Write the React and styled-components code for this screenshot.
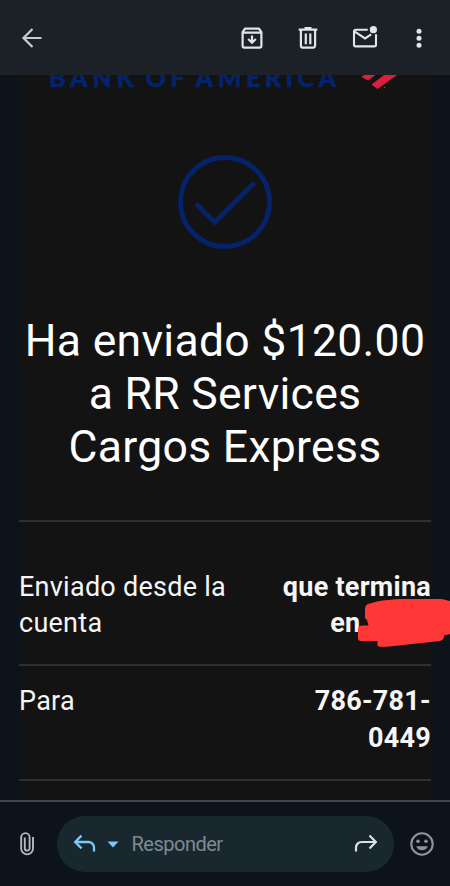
import React from 'react';
import styled, { createGlobalStyle } from 'styled-components';

const GlobalStyle = createGlobalStyle`
    body {
        margin: 0;
        background: #0c131a;
        font-family: Roboto, 'Liberation Sans', sans-serif;
    }
    svg {
        display: block;
        flex: none;
    }
`;

const Screen = styled.div`
    display: flex;
    flex-direction: column;
    width: 450px;
    height: 886px;
    overflow: hidden;
    background: #0c131a;
`;

const TopBar = styled.header`
    display: flex;
    align-items: center;
    justify-content: space-between;
    flex: none;
    box-sizing: border-box;
    height: 75px;
    padding: 0 17px 0 18px;
    background: #1c2128;
`;

const Actions = styled.div`
    display: flex;
    align-items: center;
    gap: 28.5px;
`;

const IconButton = styled.button`
    display: flex;
    padding: 0;
    border: none;
    background: transparent;
    cursor: pointer;
    color: ${(props) => props.$color || '#e1e4ea'};
`;

const MoreButton = styled(IconButton)`
    margin-left: -2px;
`;

const MailBody = styled.main`
    flex: none;
    height: 725px;
    padding: 0 19px;
    overflow: hidden;
    background: #0c131a;
`;

const Letter = styled.article`
    display: flex;
    flex-direction: column;
    height: 725px;
    background: #131313;
`;

const Brand = styled.div`
    display: flex;
    align-items: flex-end;
    flex: none;
    height: 18px;
    padding-left: 30px;
    overflow: hidden;
`;

const BrandName = styled.div`
    display: flex;
    gap: 7px;
    width: 312px;
    margin-bottom: 1px;
    font-family: Lato, 'Liberation Sans', sans-serif;
    font-size: 25px;
    font-weight: 900;
    line-height: 30px;
    color: #05236a;
    -webkit-text-stroke: 0.6px #05236a;
`;

const BrandWord = styled.span`
    letter-spacing: ${(props) => props.$spacing};
`;

const CheckMark = styled.div`
    display: flex;
    justify-content: center;
    margin-top: 61px;
`;

const Title = styled.h1`
    margin: 65px 0 0;
    font-size: 44.5px;
    font-weight: 400;
    line-height: 53px;
    text-align: center;
    letter-spacing: 0.3px;
    white-space: nowrap;
    color: #fff;
`;

const Details = styled.dl`
    margin: 46px 0 0;
    border-top: 2px solid #303030;
`;

const Row = styled.div`
    display: flex;
    justify-content: space-between;
    box-sizing: border-box;
    height: ${(props) => props.$height};
    padding-top: ${(props) => props.$top};
    border-bottom: 2px solid #303030;
    font-size: 27px;
    line-height: 36.5px;
    letter-spacing: 0.26px;
    color: #f6f6f6;
`;

const Label = styled.dt`
    white-space: nowrap;
`;

const Value = styled.dd`
    margin: 0;
    font-weight: 700;
    text-align: right;
    white-space: nowrap;
`;

const Hidden = styled.span`
    position: relative;
    display: inline-block;
    width: 70.5px;
`;

const Scribble = styled.svg`
    position: absolute;
    left: -3.5px;
    top: -34px;
`;

const ReplyBar = styled.footer`
    display: flex;
    align-items: center;
    flex: none;
    box-sizing: border-box;
    height: 86px;
    padding: 0 15px 0 19px;
    border-top: 2px solid #41464c;
    background: #0c131a;
`;

const ReplyField = styled.div`
    display: flex;
    align-items: center;
    box-sizing: border-box;
    width: 337px;
    height: 56px;
    margin: 0 15.5px 0 20.5px;
    padding: 0 16px 0 16.5px;
    border-radius: 28px;
    background: #19282f;
`;

const CaretWrap = styled.span`
    margin-left: 9.5px;
`;

const Placeholder = styled.span`
    flex: 1;
    margin-left: 13px;
    font-size: 20px;
    line-height: 24px;
    letter-spacing: -0.5px;
    color: #7f8a92;
`;

const BackIcon = () => (
    <svg width="28" height="28" fill="none" stroke="currentColor" strokeWidth="2.2">
        <path d="M23.5 14H6M14.5 5L5.5 14l9 9" />
    </svg>
);

const ArchiveIcon = () => (
    <svg width="28" height="28" fill="none" stroke="currentColor" strokeWidth="2.2">
        <path d="M4.6 8.2L7 4.6h14l2.4 3.6v13.6a1.8 1.8 0 0 1-1.8 1.8H6.4a1.8 1.8 0 0 1-1.8-1.8zM4.6 8.6h18.8" strokeLinejoin="round" />
        <path d="M14 11.5v7M10.2 15l3.8 3.8 3.8-3.8" />
    </svg>
);

const TrashIcon = () => (
    <svg width="28" height="28" fill="none" stroke="currentColor" strokeWidth="2.2">
        <path d="M4.7 5.7h18.6M10.5 4.2h7M6.9 6v15.8a1.8 1.8 0 0 0 1.8 1.8h10.6a1.8 1.8 0 0 0 1.8-1.8V6M11.8 9.5v10.7M16.3 9.5v10.7" />
    </svg>
);

const UnreadIcon = () => (
    <svg width="28" height="28" fill="none" stroke="currentColor" strokeWidth="2.1">
        <path d="M16.7 5.8H4.6a1.6 1.6 0 0 0-1.6 1.6v13.4a1.6 1.6 0 0 0 1.6 1.6h18.8a1.6 1.6 0 0 0 1.6-1.6v-10.6M3.4 7.4l10.6 7 6.2-4.1" />
        <circle cx="22.4" cy="5.7" r="3.6" fill="currentColor" stroke="none" />
    </svg>
);

const MoreIcon = () => (
    <svg width="28" height="28" fill="currentColor">
        <circle cx="14" cy="7.2" r="2.5" />
        <circle cx="14" cy="14.2" r="2.5" />
        <circle cx="14" cy="21.2" r="2.5" />
    </svg>
);

const FlagIcon = () => (
    <svg width="38" height="18" fill="#dc1f3e">
        <path d="M0.5 2L3 0H14.5L7 5.5z" />
        <path d="M10.5 9.5L23 0h13L16.5 14z" />
        <circle cx="23.5" cy="12.5" r="0.8" />
    </svg>
);

const ClipIcon = () => (
    <svg width="17" height="28" fill="none" stroke="currentColor" strokeWidth="1.9">
        <path d="M14 7v11.5a5.9 5.9 0 0 1-11.8 0V7.3a4.2 4.2 0 0 1 8.4 0v10.9a2.4 2.4 0 0 1-4.8 0V7.5" />
    </svg>
);

const ReplyIcon = () => (
    <svg width="24" height="20" fill="none" stroke="#7cc8f4" strokeWidth="2.3">
        <path d="M8.5 1.6L2.2 8l6.3 6.4M2.8 8H15.5a5.5 5.5 0 0 1 5.5 5.5V17.5" />
    </svg>
);

const CaretIcon = () => (
    <svg width="12" height="7" fill="#7cc8f4">
        <path d="M0.5 0.5h11L6 6.5z" />
    </svg>
);

const ForwardIcon = () => (
    <svg width="24" height="20" fill="none" stroke="#dbe1e5" strokeWidth="2.2">
        <path d="M15.5 1.6L21.8 8l-6.3 6.4M21.2 8H7.5A5.5 5.5 0 0 0 2 13.5V17.5" />
    </svg>
);

const SmileIcon = () => (
    <svg width="26" height="26" fill="currentColor">
        <circle cx="13" cy="13" r="10.7" fill="none" stroke="currentColor" strokeWidth="2.1" />
        <circle cx="9" cy="10.3" r="1.8" />
        <circle cx="17" cy="10.3" r="1.8" />
        <path d="M7.2 15.2h11.6a6.2 6.2 0 0 1-11.6 0z" />
    </svg>
);

const App = () => {
    return (
        <Screen>
            <GlobalStyle />
            <TopBar>
                <IconButton aria-label="Atrás" $color="#c8cdd4"><BackIcon /></IconButton>
                <Actions>
                    <IconButton aria-label="Archivar"><ArchiveIcon /></IconButton>
                    <IconButton aria-label="Eliminar"><TrashIcon /></IconButton>
                    <IconButton aria-label="No leído"><UnreadIcon /></IconButton>
                    <MoreButton aria-label="Más"><MoreIcon /></MoreButton>
                </Actions>
            </TopBar>

            <MailBody>
                <Letter>
                    <Brand>
                        <BrandName>
                            <BrandWord $spacing="4.8px">BANK</BrandWord>
                            <BrandWord $spacing="4.2px">OF</BrandWord>
                            <BrandWord $spacing="4.5px">AMERICA</BrandWord>
                        </BrandName>
                        <FlagIcon />
                    </Brand>
                    <CheckMark>
                        <svg width="96" height="96" fill="none" stroke="#05236a">
                            <circle cx="48" cy="48" r="44.5" strokeWidth="4.8" />
                            <path d="M18.8 49.5L37.8 68.3L77.5 28.5" strokeWidth="4.8" />
                        </svg>
                    </CheckMark>
                    <Title>
                        Ha enviado $120.00<br />
                        a RR Services<br />
                        Cargos Express
                    </Title>
                    <Details>
                        <Row $height="144px" $top="46.5px">
                            <Label>Enviado desde la<br />cuenta</Label>
                            <Value>
                                que termina<br />
                                en
                                <Hidden>
                                    <Scribble width="95" height="52" fill="#ff3837">
                                        <path d="M8 11Q8 6 13 5.5L20 3.5Q30 1.5 45 1H85Q89 2 95 3.5V36Q91 36.5 87 37.5Q87 42 83 43L60 45.5L32 48.5Q21 49.5 20.5 47.5V43H4Q1 43 1 40V31Q1 28 5 27.5H11.5L10 22Q7.5 20 8 18z" />
                                    </Scribble>
                                </Hidden>
                            </Value>
                        </Row>
                        <Row $height="115px" $top="17px">
                            <Label>Para</Label>
                            <Value>786-781-<br />0449</Value>
                        </Row>
                    </Details>
                </Letter>
            </MailBody>

            <ReplyBar>
                <IconButton aria-label="Adjuntar" $color="#b4b9c0"><ClipIcon /></IconButton>
                <ReplyField>
                    <ReplyIcon />
                    <CaretWrap><CaretIcon /></CaretWrap>
                    <Placeholder>Responder</Placeholder>
                    <ForwardIcon />
                </ReplyField>
                <IconButton aria-label="Emoji" $color="#8e949b"><SmileIcon /></IconButton>
            </ReplyBar>
        </Screen>
    );
}

export default App;
